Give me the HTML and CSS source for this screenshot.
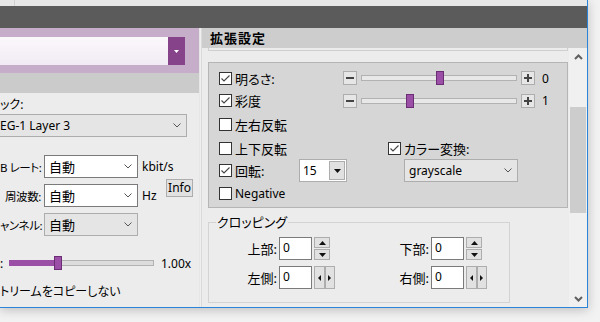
FILE: index.html
```html
<!DOCTYPE html>
<html lang="ja">
<head>
    <meta charset="UTF-8">
    <title>拡張設定</title>
    <link rel="stylesheet" href="styles.css">
</head>
<body>

<div class="window">
    <div class="desk-top"><div class="desk-line"></div></div>
    <div class="titlebar"></div>
    <div class="main">

        <!-- 左側 -->
        <div class="left">
            <div class="preset">
                <div class="preset-box">
                    <div class="preset-field"></div>
                    <div class="preset-btn"><svg width="5" height="3" viewBox="0 0 5 3"><path d="M0 0H5L2.5 3Z" fill="#fff"/></svg></div>
                </div>
            </div>
            <div class="band"></div>
            <div class="lbody">
                <div class="cap jp">ック:</div>
                <div class="combo gray codec">
                    <span>EG-1 Layer 3</span>
                    <svg class="chev" width="8" height="5" viewBox="0 0 8 5"><path d="M0.5 0.5L4 4L7.5 0.5" fill="none" stroke="#555"/></svg>
                </div>

                <div class="frow">
                    <div class="flabel jp">B レート:</div>
                    <div class="combo white">
                        <span class="jp">自動</span>
                        <svg class="chev" width="8" height="5" viewBox="0 0 8 5"><path d="M0.5 0.5L4 4L7.5 0.5" fill="none" stroke="#555"/></svg>
                    </div>
                    <span class="unit">kbit/s</span>
                </div>
                <div class="frow">
                    <div class="flabel jp">周波数:</div>
                    <div class="combo white">
                        <span class="jp">自動</span>
                        <svg class="chev" width="8" height="5" viewBox="0 0 8 5"><path d="M0.5 0.5L4 4L7.5 0.5" fill="none" stroke="#555"/></svg>
                    </div>
                    <span class="unit">Hz</span>
                    <div class="info">Info</div>
                </div>
                <div class="frow">
                    <div class="flabel jp">ャンネル:</div>
                    <div class="combo gray">
                        <span class="jp">自動</span>
                        <svg class="chev" width="8" height="5" viewBox="0 0 8 5"><path d="M0.5 0.5L4 4L7.5 0.5" fill="none" stroke="#555"/></svg>
                    </div>
                </div>

                <div class="speed">
                    <span class="colon">:</span>
                    <div class="ltrack">
                        <div class="lfill" style="width:45px"></div>
                        <div class="thumb" style="left:44px"></div>
                    </div>
                    <span class="speed-val">1.00x</span>
                </div>
                <div class="nocopy jp">トリームをコピーしない</div>
            </div>
        </div>

        <div class="split"></div>

        <!-- 右側 -->
        <div class="right">
            <div class="rhead jp">拡張設定</div>
            <div class="rscroll">
                <div class="rcontent">
                    <div class="prevbox"></div>

                    <div class="effects">
                        <label class="chk r1">
                            <svg width="13" height="13" viewBox="0 0 13 13"><rect x="0.5" y="0.5" width="12" height="12" fill="#fff" stroke="#333"/><path d="M2.5 6.5L5 9L10.5 3.5" fill="none" stroke="#444" stroke-width="1.1"/></svg>
                            <span class="jp">明るさ:</span>
                        </label>
                        <div class="slider r1">
                            <span class="pm"><svg width="10" height="10" viewBox="0 0 10 10"><path d="M1 5H9" stroke="#444" stroke-width="2"/></svg></span>
                            <div class="track"><div class="thumb" style="left:74px"></div></div>
                            <span class="pm"><svg width="10" height="10" viewBox="0 0 10 10"><path d="M1 5H9M5 1V9" stroke="#444" stroke-width="2"/></svg></span>
                            <span class="sval">0</span>
                        </div>

                        <label class="chk r2">
                            <svg width="13" height="13" viewBox="0 0 13 13"><rect x="0.5" y="0.5" width="12" height="12" fill="#fff" stroke="#333"/><path d="M2.5 6.5L5 9L10.5 3.5" fill="none" stroke="#444" stroke-width="1.1"/></svg>
                            <span class="jp">彩度</span>
                        </label>
                        <div class="slider r2">
                            <span class="pm"><svg width="10" height="10" viewBox="0 0 10 10"><path d="M1 5H9" stroke="#444" stroke-width="2"/></svg></span>
                            <div class="track"><div class="thumb" style="left:44px"></div></div>
                            <span class="pm"><svg width="10" height="10" viewBox="0 0 10 10"><path d="M1 5H9M5 1V9" stroke="#444" stroke-width="2"/></svg></span>
                            <span class="sval">1</span>
                        </div>

                        <label class="chk r3">
                            <svg width="13" height="13" viewBox="0 0 13 13"><rect x="0.5" y="0.5" width="12" height="12" fill="#fff" stroke="#333"/></svg>
                            <span class="jp">左右反転</span>
                        </label>

                        <label class="chk r4">
                            <svg width="13" height="13" viewBox="0 0 13 13"><rect x="0.5" y="0.5" width="12" height="12" fill="#fff" stroke="#333"/></svg>
                            <span class="jp">上下反転</span>
                        </label>
                        <label class="chk r4 c4">
                            <svg width="13" height="13" viewBox="0 0 13 13"><rect x="0.5" y="0.5" width="12" height="12" fill="#fff" stroke="#333"/><path d="M2.5 6.5L5 9L10.5 3.5" fill="none" stroke="#444" stroke-width="1.1"/></svg>
                            <span class="jp">カラー変換:</span>
                        </label>

                        <label class="chk r5">
                            <svg width="13" height="13" viewBox="0 0 13 13"><rect x="0.5" y="0.5" width="12" height="12" fill="#fff" stroke="#333"/><path d="M2.5 6.5L5 9L10.5 3.5" fill="none" stroke="#444" stroke-width="1.1"/></svg>
                            <span class="jp">回転:</span>
                        </label>
                        <div class="rotate r5">
                            <span>15</span>
                            <span class="rot-btn"><svg width="7" height="4" viewBox="0 0 7 4"><path d="M0 0H7L3.5 4Z" fill="#111"/></svg></span>
                        </div>
                        <div class="combo gray gscale r5">
                            <span>grayscale</span>
                            <svg class="chev" width="8" height="5" viewBox="0 0 8 5"><path d="M0.5 0.5L4 4L7.5 0.5" fill="none" stroke="#555"/></svg>
                        </div>

                        <label class="chk r6">
                            <svg width="13" height="13" viewBox="0 0 13 13"><rect x="0.5" y="0.5" width="12" height="12" fill="#fff" stroke="#333"/></svg>
                            <span>Negative</span>
                        </label>
                    </div>

                    <div class="crop">
                        <span class="legend jp">クロッピング</span>
                        <div class="crop-grid">
                            <span class="clabel jp">上部:</span>
                            <div class="num">0</div>
                            <div class="vspin">
                                <span><svg width="7" height="4" viewBox="0 0 7 4"><path d="M0 4H7L3.5 0Z" fill="#111"/></svg></span>
                                <span><svg width="7" height="4" viewBox="0 0 7 4"><path d="M0 0H7L3.5 4Z" fill="#111"/></svg></span>
                            </div>
                            <span class="clabel jp">下部:</span>
                            <div class="num">0</div>
                            <div class="vspin">
                                <span><svg width="7" height="4" viewBox="0 0 7 4"><path d="M0 4H7L3.5 0Z" fill="#111"/></svg></span>
                                <span><svg width="7" height="4" viewBox="0 0 7 4"><path d="M0 0H7L3.5 4Z" fill="#111"/></svg></span>
                            </div>

                            <span class="clabel jp">左側:</span>
                            <div class="num">0</div>
                            <div class="hspin">
                                <span><svg width="3" height="6" viewBox="0 0 3 6"><path d="M3 0V6L0 3Z" fill="#111"/></svg></span>
                                <span><svg width="3" height="6" viewBox="0 0 3 6"><path d="M0 0V6L3 3Z" fill="#111"/></svg></span>
                            </div>
                            <span class="clabel jp">右側:</span>
                            <div class="num">0</div>
                            <div class="hspin">
                                <span><svg width="3" height="6" viewBox="0 0 3 6"><path d="M3 0V6L0 3Z" fill="#111"/></svg></span>
                                <span><svg width="3" height="6" viewBox="0 0 3 6"><path d="M0 0V6L3 3Z" fill="#111"/></svg></span>
                            </div>
                        </div>
                    </div>
                </div>

                <div class="vbar">
                    <div class="vbar-btn"><svg width="9" height="6" viewBox="0 0 9 6"><path d="M1 5L4.5 1.5L8 5" fill="none" stroke="#606060" stroke-width="2"/></svg></div>
                    <div class="vbar-thumb"></div>
                    <div class="vbar-rest"></div>
                    <div class="vbar-btn"><svg width="9" height="6" viewBox="0 0 9 6"><path d="M1 1L4.5 4.5L8 1" fill="none" stroke="#606060" stroke-width="2"/></svg></div>
                </div>
            </div>
        </div>

    </div>
</div>

</body>
</html>
```

FILE: styles.css
```css
html,body{
    margin: 0;
    padding: 0;
}

body{
    width: 600px;
    height: 322px;
    overflow: hidden;
    background-color: #f2f2f2;
    font-family: "Noto Sans", "Noto Sans CJK JP", sans-serif;
    font-size: 12px;
    color: #000;
}

.jp{
    font-size: 13px;
    font-feature-settings: "palt";
}

.window{
    width: 587px;
    border-right: 1px solid #2b84d6;
    border-bottom: 1px solid #2b84d6;
    box-shadow: 0 2px 10px rgba(0,0,0,0.22);
}

.desk-top{
    height: 6px;
    background-color: #e7e7e7;
}

.desk-line{
    width: 1px;
    height: 6px;
    margin-left: 14px;
    background-color: #d2d2d2;
}

.titlebar{
    height: 22px;
    background-color: #5b5b5b;
}

.main{
    display: flex;
    height: 279px;
}

/* 左側 */

.left{
    width: 199px;
    display: flex;
    flex-direction: column;
}

.preset{
    height: 45px;
    padding-top: 9px;
    box-sizing: border-box;
    background-color: #c6aecb;
}

.preset-box{
    display: flex;
    width: 185px;
    height: 28px;
}

.preset-field{
    flex: 1;
    background: linear-gradient(#fbf8fc, #f1eaf3);
}

.preset-btn{
    width: 17px;
    display: flex;
    align-items: center;
    justify-content: center;
    background-color: #86438a;
}

.band{
    height: 20px;
    background-color: #cbcbcb;
}

.lbody{
    flex: 1;
    padding-top: 4px;
    background-color: #ececec;
    white-space: nowrap;
}

.lbody .cap,
.lbody .nocopy{
    font-size: 12px;
}

.cap{
    line-height: 16px;
}

.combo{
    display: flex;
    align-items: center;
    height: 23px;
    box-sizing: border-box;
    padding: 0 5px 0 4px;
}

.combo span{
    flex: 1;
}

.combo.white{
    background-color: #fff;
    border: 1px solid #7a7a7a;
}

.combo.gray{
    background-color: #e5e5e5;
    border: 1px solid #adadad;
}

.combo.codec{
    width: 187px;
    margin-top: 1px;
    border-left: none;
    padding-left: 0;
}

.frow{
    display: flex;
    align-items: center;
    margin-top: 6px;
}

.codec + .frow{
    margin-top: 18px;
}

.flabel{
    width: 41px;
    text-align: right;
    font-size: 11.5px;
    letter-spacing: -0.4px;
}

.frow .combo{
    width: 94px;
    margin-left: 3px;
}

.unit{
    margin-left: 4px;
}

.info{
    align-self: flex-start;
    margin: -5px 6px 0 auto;
    width: 27px;
    height: 18px;
    box-sizing: border-box;
    line-height: 16px;
    text-align: center;
    background-color: #e1e1e1;
    border: 1px solid #adadad;
}

.speed{
    display: flex;
    align-items: center;
    height: 18px;
    margin-top: 18px;
}

.colon{
    width: 9px;
}

.ltrack{
    position: relative;
    width: 145px;
    height: 6px;
    box-sizing: border-box;
    background-color: #dcdcdc;
    border: 1px solid #b2b2b2;
}

.lfill{
    height: 6px;
    margin: -1px 0 0 -1px;
    background-color: #9b4fa6;
}

.speed-val{
    margin-left: 7px;
}

.nocopy{
    margin-top: 12px;
    line-height: 16px;
}

.split{
    width: 3px;
    background: linear-gradient(to right, #dadada, #f6f6f6 40%, #cfcfcf);
}

/* 右側 */

.right{
    flex: 1;
    display: flex;
    flex-direction: column;
}

.rhead{
    height: 20px;
    line-height: 20px;
    padding-left: 8px;
    font-weight: bold;
    letter-spacing: 1px;
    background-color: #cdcdcd;
}

.rscroll{
    flex: 1;
    display: flex;
}

.rcontent{
    width: 367px;
    padding-left: 6px;
    box-sizing: border-box;
    background-color: #ececec;
}

.prevbox{
    width: 358px;
    height: 2px;
    border: 1px solid #cfcfcf;
    border-top: none;
}

.effects{
    display: grid;
    grid-template-columns: 80px 44px 45px 1fr;
    grid-template-rows: 22px 23px 25px 22px 23px 22px;
    width: 360px;
    height: 146px;
    margin-top: 11px;
    padding: 4px 0 0 10px;
    box-sizing: border-box;
    background-color: #d6d6d6;
    border: 1px solid #b5b5b5;
}

.r1{ grid-row: 1; }
.r2{ grid-row: 2; }
.r3{ grid-row: 3; }
.r4{ grid-row: 4; }
.r5{ grid-row: 5; }
.r6{ grid-row: 6; }

.chk{
    grid-column: 1;
    display: flex;
    align-items: center;
    white-space: nowrap;
}

.chk svg{
    margin-right: 3px;
}

.chk.c4{
    grid-column: 4;
}

.slider{
    grid-column: 3 / 5;
    display: flex;
    align-items: center;
}

.pm{
    width: 14px;
    height: 14px;
    box-sizing: border-box;
    display: flex;
    align-items: center;
    justify-content: center;
    background-color: #e6e6e6;
    border: 1px solid #adadad;
}

.track{
    position: relative;
    width: 156px;
    height: 6px;
    margin: 0 4px 0 4px;
    box-sizing: border-box;
    background-color: #e8e8e8;
    border: 1px solid #b2b2b2;
}

.thumb{
    position: absolute;
    top: -5px;
    width: 8px;
    height: 14px;
    box-sizing: border-box;
    background-color: #9b4fa6;
    border: 1px solid #6b2d74;
}

.sval{
    margin-left: 7px;
}

.rotate{
    grid-column: 2 / 4;
    align-self: center;
    display: flex;
    align-items: center;
    width: 48px;
    height: 23px;
    box-sizing: border-box;
    padding: 1px 1px 1px 3px;
    background-color: #fff;
    border: 1px solid #adadad;
}

.rotate span:first-child{
    flex: 1;
}

.rot-btn{
    width: 16px;
    height: 19px;
    box-sizing: border-box;
    display: flex;
    align-items: center;
    justify-content: center;
    background-color: #e1e1e1;
    border: 1px solid #adadad;
}

.combo.gscale{
    grid-column: 4;
    align-self: center;
    width: 114px;
    margin-left: 16px;
}

.crop{
    width: 302px;
    height: 81px;
    margin-top: 14px;
    box-sizing: border-box;
    border: 1px solid #d3d3d3;
}

.legend{
    display: table;
    margin: -9px 0 0 7px;
    padding: 0 1px;
    line-height: 16px;
    background-color: #ececec;
}

.crop-grid{
    display: grid;
    grid-template-columns: 70px 34px 22px 96px 34px 22px;
    grid-template-rows: 23px 23px;
    row-gap: 6px;
    margin-top: 7px;
}

.clabel{
    align-self: center;
    text-align: right;
    padding-right: 2px;
}

.num{
    width: 33px;
    height: 23px;
    box-sizing: border-box;
    padding-left: 3px;
    line-height: 20px;
    background-color: #fff;
    border: 1px solid #7a7a7a;
}

.vspin{
    display: flex;
    flex-direction: column;
    gap: 1px;
    width: 16px;
    margin-left: 1px;
}

.vspin span,
.hspin span{
    display: flex;
    align-items: center;
    justify-content: center;
    box-sizing: border-box;
    background-color: #e1e1e1;
    border: 1px solid #adadad;
}

.vspin span{
    height: 11px;
}

.hspin{
    display: flex;
    margin-left: 1px;
}

.hspin span{
    width: 11px;
    height: 23px;
}

.vbar{
    width: 18px;
    display: flex;
    flex-direction: column;
    background-color: #f0f0f0;
}

.vbar-btn{
    height: 17px;
    display: flex;
    align-items: center;
    justify-content: center;
}

.vbar-thumb{
    height: 106px;
    margin: 42px 1px 0 1px;
    background-color: #cdcdcd;
}

.vbar-rest{
    flex: 1;
}
```
